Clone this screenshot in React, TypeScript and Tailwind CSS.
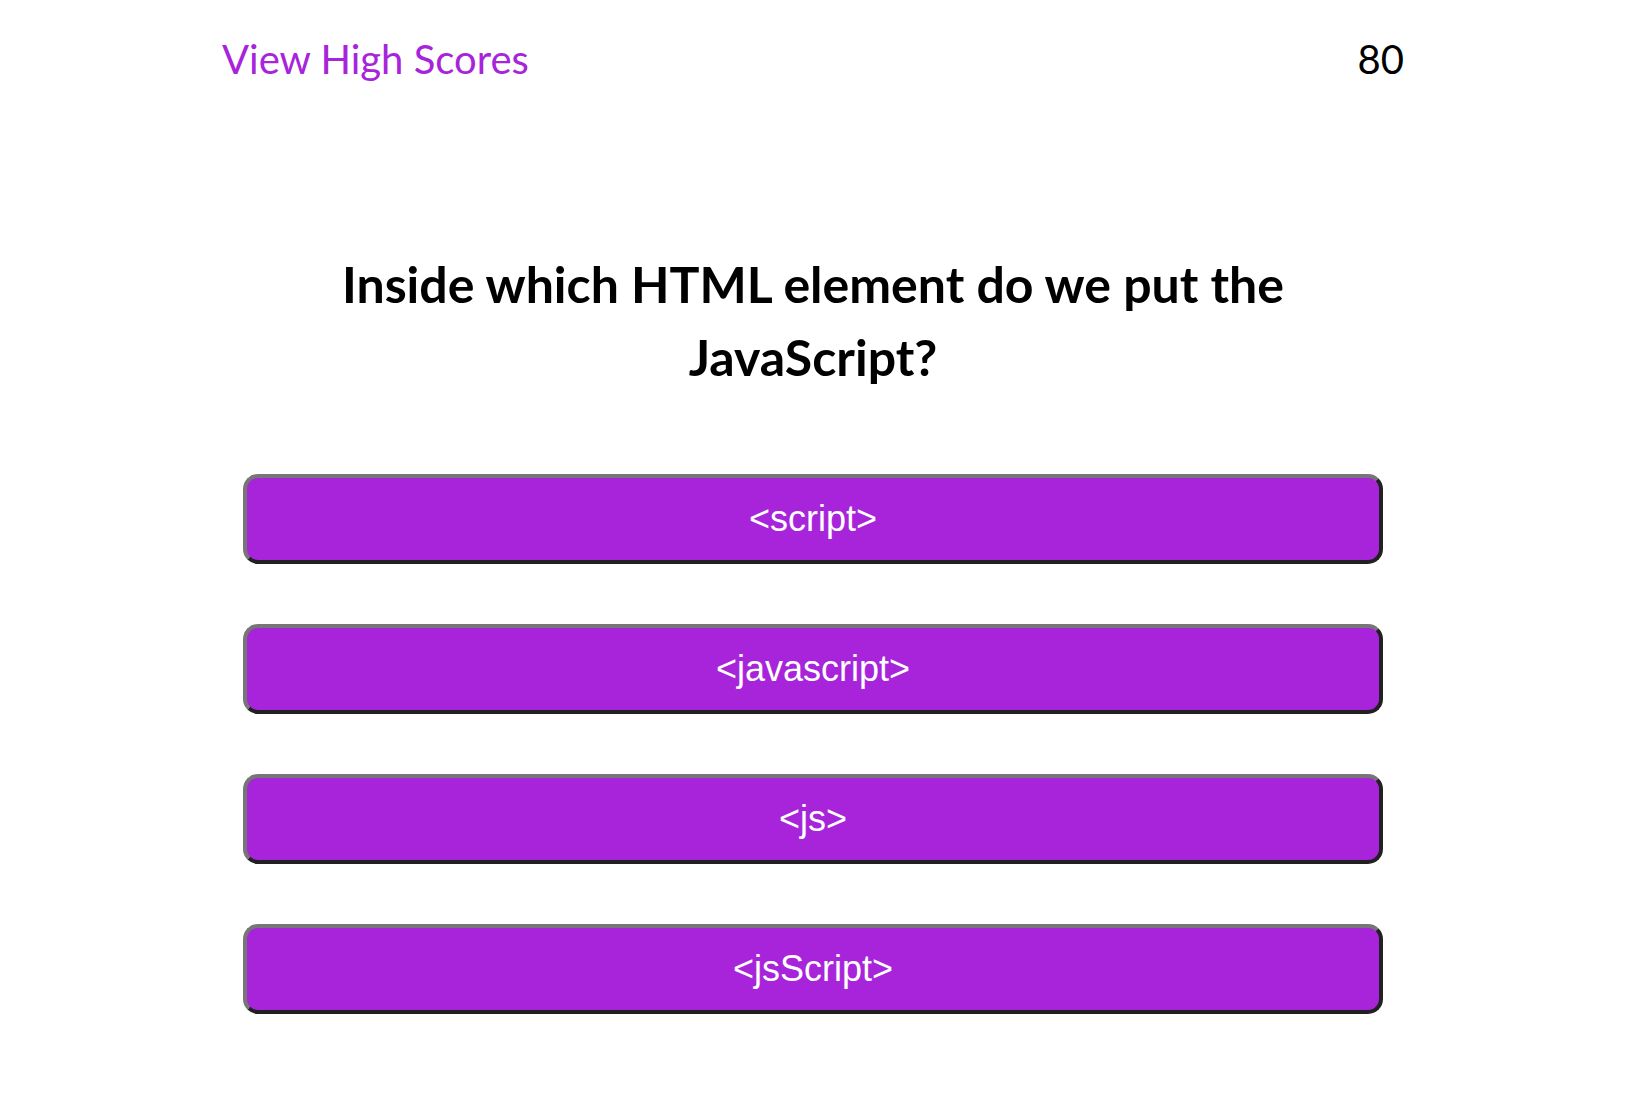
import React from "react";

const answers = ["<script>", "<javascript>", "<js>", "<jsScript>"];

export default function App() {
  return (
    <div className="min-h-[1094px] w-full bg-white flex justify-center pr-4">
      <div className="w-[1182px] flex flex-col">
        <header className="flex justify-between items-baseline pt-[33px] font-['Lato',sans-serif] text-[40px] leading-[52px]">
          <a className="text-[#a724da] no-underline cursor-pointer">View High Scores</a>
          <span className="text-black">80</span>
        </header>
        <h1 className="mt-[163px] text-center font-['Lato',sans-serif] font-bold text-[50px] leading-[73px] text-black">
          Inside which HTML element do we put the
          <br />
          JavaScript?
        </h1>
        <div className="mt-[80px] flex flex-col items-center gap-[60px]">
          {answers.map((a) => (
            <button
              key={a}
              className="w-[1140px] h-[90px] rounded-[15px] border-4 [border-style:outset] border-[#767676] bg-[#a724da] text-white font-['Liberation_Sans',Arial,sans-serif] text-[36px] leading-none flex items-center justify-center"
            >
              {a}
            </button>
          ))}
        </div>
      </div>
    </div>
  );
}
